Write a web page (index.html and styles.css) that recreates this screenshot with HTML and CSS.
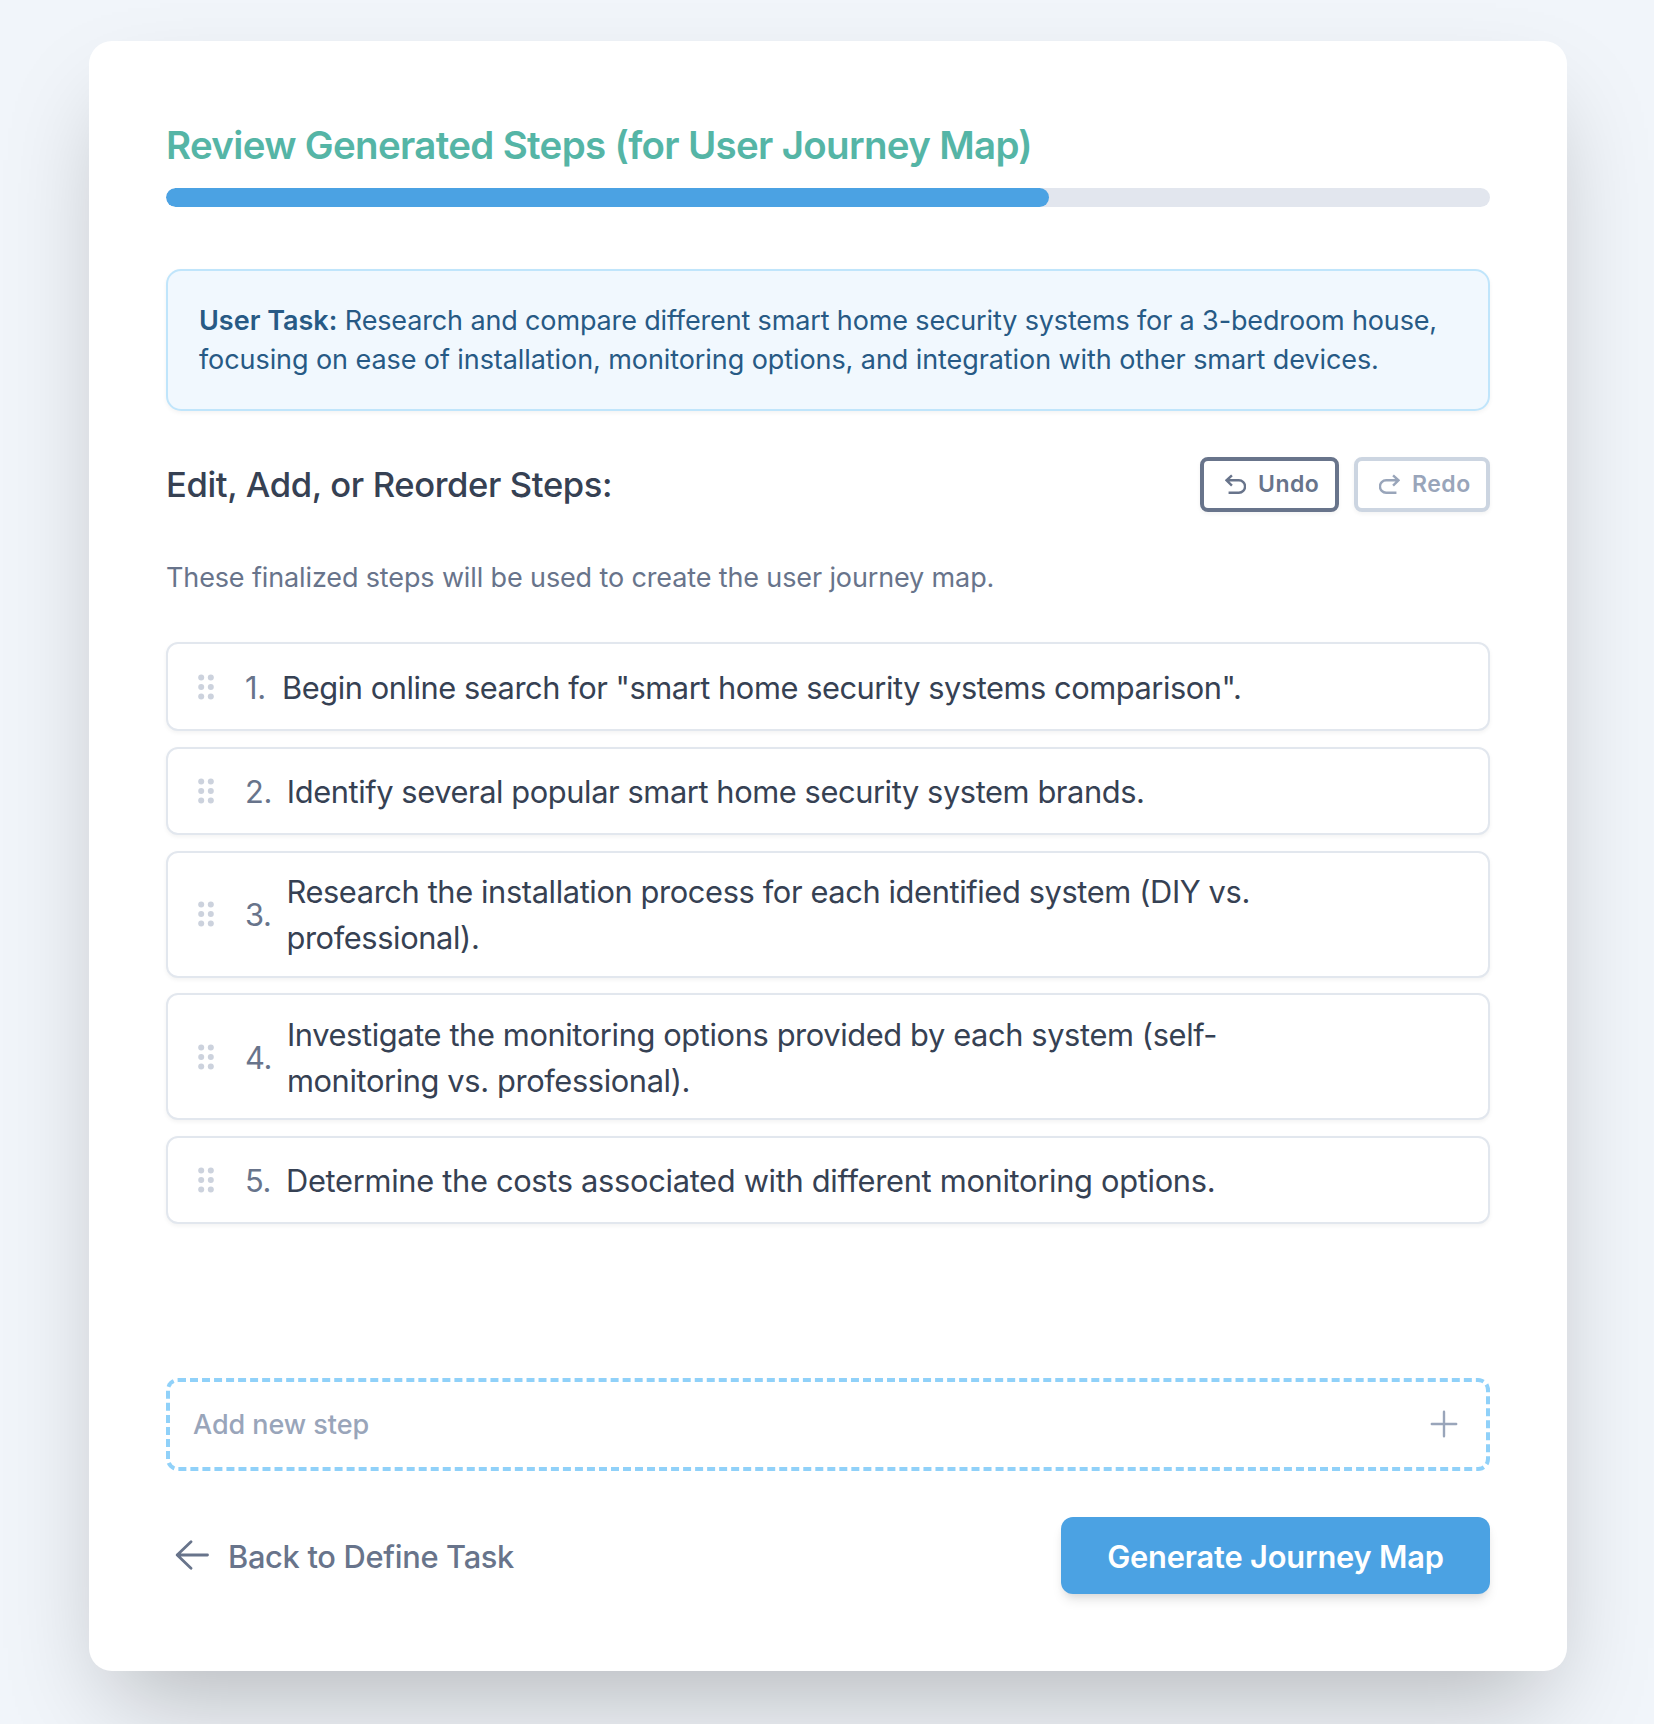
FILE: index.html
```html
<!DOCTYPE html>
<html lang="en">
<head>
<meta charset="utf-8">
<title>Review Generated Steps</title>
<link rel="stylesheet" href="styles.css">
</head>
<body>
<svg class="sprite" width="0" height="0" aria-hidden="true">
  <symbol id="grip" viewBox="0 0 16 26">
    <circle cx="3.2" cy="3.4" r="3"/><circle cx="12.8" cy="3.4" r="3"/>
    <circle cx="3.2" cy="13" r="3"/><circle cx="12.8" cy="13" r="3"/>
    <circle cx="3.2" cy="22.6" r="3"/><circle cx="12.8" cy="22.6" r="3"/>
  </symbol>
</svg>
<main class="card">
  <h1 class="title">Review Generated Steps (for User Journey Map)</h1>
  <div class="progress"><div class="progress-fill" style="width: 66.67%"></div></div>

  <p class="task"><strong>User Task:</strong> Research and compare different smart home security systems for a 3-bedroom house,<br><span class="task-rest">focusing on ease of installation, monitoring options, and integration with other smart devices.</span></p>

  <div class="toolbar">
    <h2 class="subtitle">Edit, Add, or Reorder Steps:</h2>
    <div class="history">
      <button class="tool undo"><svg class="tool-icon" viewBox="0 0 20 20"><path d="M6.6 1.2 1.5 6l5.1 5M1.8 6h11.4a5.8 5.8 0 0 1 0 11.8H3.4"/></svg><span>Undo</span></button>
      <button class="tool redo" disabled><svg class="tool-icon" viewBox="0 0 20 20"><path d="M13.4 1.2 18.5 6l-5.1 5M18.2 6H6.8a5.8 5.8 0 0 0 0 11.8h9.8"/></svg><span>Redo</span></button>
    </div>
  </div>

  <p class="hint">These finalized steps will be used to create the user journey map.</p>

  <ol class="steps">
    <li class="step"><svg class="grip"><use href="#grip"/></svg><span class="num">1.</span><span class="text">Begin online search for "smart home security systems comparison".</span></li>
    <li class="step"><svg class="grip"><use href="#grip"/></svg><span class="num">2.</span><span class="text">Identify several popular smart home security system brands.</span></li>
    <li class="step"><svg class="grip"><use href="#grip"/></svg><span class="num">3.</span><span class="text">Research the installation process for each identified system (DIY vs.<br>professional).</span></li>
    <li class="step"><svg class="grip"><use href="#grip"/></svg><span class="num">4.</span><span class="text">Investigate the monitoring options provided by each system (self-<br>monitoring vs. professional).</span></li>
    <li class="step"><svg class="grip"><use href="#grip"/></svg><span class="num">5.</span><span class="text">Determine the costs associated with different monitoring options.</span></li>
  </ol>

  <div class="add">
    <span>Add new step</span>
    <svg class="plus" viewBox="0 0 28 28"><path d="M14 1.8v24.4M1.8 14h24.4"/></svg>
  </div>

  <div class="actions">
    <a class="back"><svg class="arrow" viewBox="0 0 34 30"><path d="M16 1.8 2.2 15 16 28.2M2.2 15H32.5"/></svg><span>Back to Define Task</span></a>
    <button class="generate">Generate Journey Map</button>
  </div>
</main>
</body>
</html>
```
FILE: styles.css
```css
* { box-sizing: border-box; }

body {
  margin: 0;
  height: 1724px;
  padding: 41px 87px 0 89px;
  overflow: hidden;
  background: #f1f5fa;
  font-family: Inter, "Liberation Sans", sans-serif;
  color: #364153;
}

h1, h2, p, ol { margin: 0; padding: 0; }
button { font-family: inherit; margin: 0; }
.sprite { position: absolute; }

.card {
  display: flex;
  flex-direction: column;
  height: 1630px;
  padding: 77px;
  border-radius: 23px;
  background: #fff;
  box-shadow: 0 48px 96px -23px rgba(0, 0, 0, 0.25);
}

.title {
  height: 54px;
  margin-bottom: 16px;
  font-size: 38.5px;
  line-height: 54px;
  font-weight: 600;
  letter-spacing: -0.68px;
  white-space: nowrap;
  color: #55b5a6;
}

.progress {
  height: 19px;
  border-radius: 10px;
  background: #e2e6ee;
  overflow: hidden;
}
.progress-fill { height: 100%; border-radius: 10px; background: #4ba2e3; }

.task {
  height: 142px;
  margin-top: 62px;
  padding: 30px 31px;
  border: 2px solid #c0e5fb;
  border-radius: 15px;
  background: #f1f8fe;
  box-shadow: 0 2px 4px rgba(0, 0, 0, 0.05);
  font-size: 27px;
  line-height: 39px;
  letter-spacing: -0.14px;
  white-space: nowrap;
  color: #275a85;
}
.task strong { font-weight: 600; letter-spacing: 0; }
.task-rest { letter-spacing: -0.08px; }

.toolbar {
  display: flex;
  justify-content: space-between;
  align-items: center;
  height: 55px;
  margin-top: 46px;
}
.subtitle {
  padding-bottom: 2px;
  font-size: 34.6px;
  font-weight: 500;
  line-height: 46px;
  letter-spacing: -0.37px;
  white-space: nowrap;
}
.history { display: flex; gap: 15px; }
.tool {
  display: flex;
  align-items: center;
  gap: 12px;
  height: 55px;
  padding: 0 0 1px 21px;
  border: 4px solid;
  border-radius: 8px;
  background: #fff;
  box-shadow: 0 2px 4px rgba(0, 0, 0, 0.05);
  font-size: 23px;
  font-weight: 600;
  letter-spacing: 0.5px;
}
.undo { width: 139px; border-color: #68748b; color: #68748b; }
.redo { width: 136px; border-color: #ccd5e1; color: #99a5ba; }
.tool-icon { width: 21px; height: 21px; fill: none; stroke: currentColor; stroke-width: 2.3; }

.hint {
  margin-top: 46px;
  font-size: 27px;
  line-height: 39px;
  letter-spacing: -0.13px;
  white-space: nowrap;
  color: #68748b;
}

.steps {
  display: flex;
  flex-direction: column;
  gap: 15.4px;
  margin-top: 45.4px;
  list-style: none;
}
.step {
  display: flex;
  align-items: center;
  min-height: 88.8px;
  padding: 16.5px 30px 14.5px;
  border: 2px solid #e2e7ee;
  border-radius: 12px;
  background: #fff;
  box-shadow: 0 2px 4px rgba(0, 0, 0, 0.05);
  font-size: 30.8px;
  line-height: 46px;
  letter-spacing: -0.38px;
  white-space: nowrap;
}
.step:nth-child(1) { letter-spacing: -0.45px; }
.step:nth-child(2) { letter-spacing: -0.41px; }
.step:nth-child(5) { letter-spacing: -0.3px; }
.grip { width: 16px; height: 26px; margin: -2px 31px 0 0; fill: #ccd2dd; }
.num { margin-right: 15px; letter-spacing: -0.4px; color: #68748b; }
.step:nth-child(1) .num { margin-right: 16.5px; }

.add {
  display: flex;
  justify-content: space-between;
  align-items: center;
  height: 93px;
  margin-top: auto;
  padding: 0 28px 0 23px;
  border: 4px dashed #90d1f9;
  border-radius: 12px;
  font-size: 27px;
  font-weight: 500;
  letter-spacing: -0.05px;
  color: #99a5ba;
}
.plus { width: 28px; height: 28px; margin-bottom: 2px; fill: none; stroke: currentColor; stroke-width: 2.4; stroke-linecap: round; }

.actions {
  display: flex;
  justify-content: space-between;
  align-items: center;
  height: 77px;
  margin-top: 46px;
}
.back {
  display: flex;
  align-items: center;
  gap: 19px;
  padding: 2px 0 0 9px;
  font-size: 30.8px;
  font-weight: 500;
  letter-spacing: -0.3px;
  color: #68748b;
}
.arrow { width: 34px; height: 30px; margin-bottom: 3px; fill: none; stroke: currentColor; stroke-width: 2.8; stroke-linecap: round; stroke-linejoin: round; }
.generate {
  width: 429px;
  height: 77px;
  padding: 2px 0 0;
  border: 0;
  border-radius: 12px;
  background: #4ba2e3;
  box-shadow: 0 8px 12px -2px rgba(0, 0, 0, 0.1), 0 4px 8px -4px rgba(0, 0, 0, 0.1);
  font-size: 30.8px;
  font-weight: 600;
  letter-spacing: -0.17px;
  white-space: nowrap;
  color: #fff;
}
```
